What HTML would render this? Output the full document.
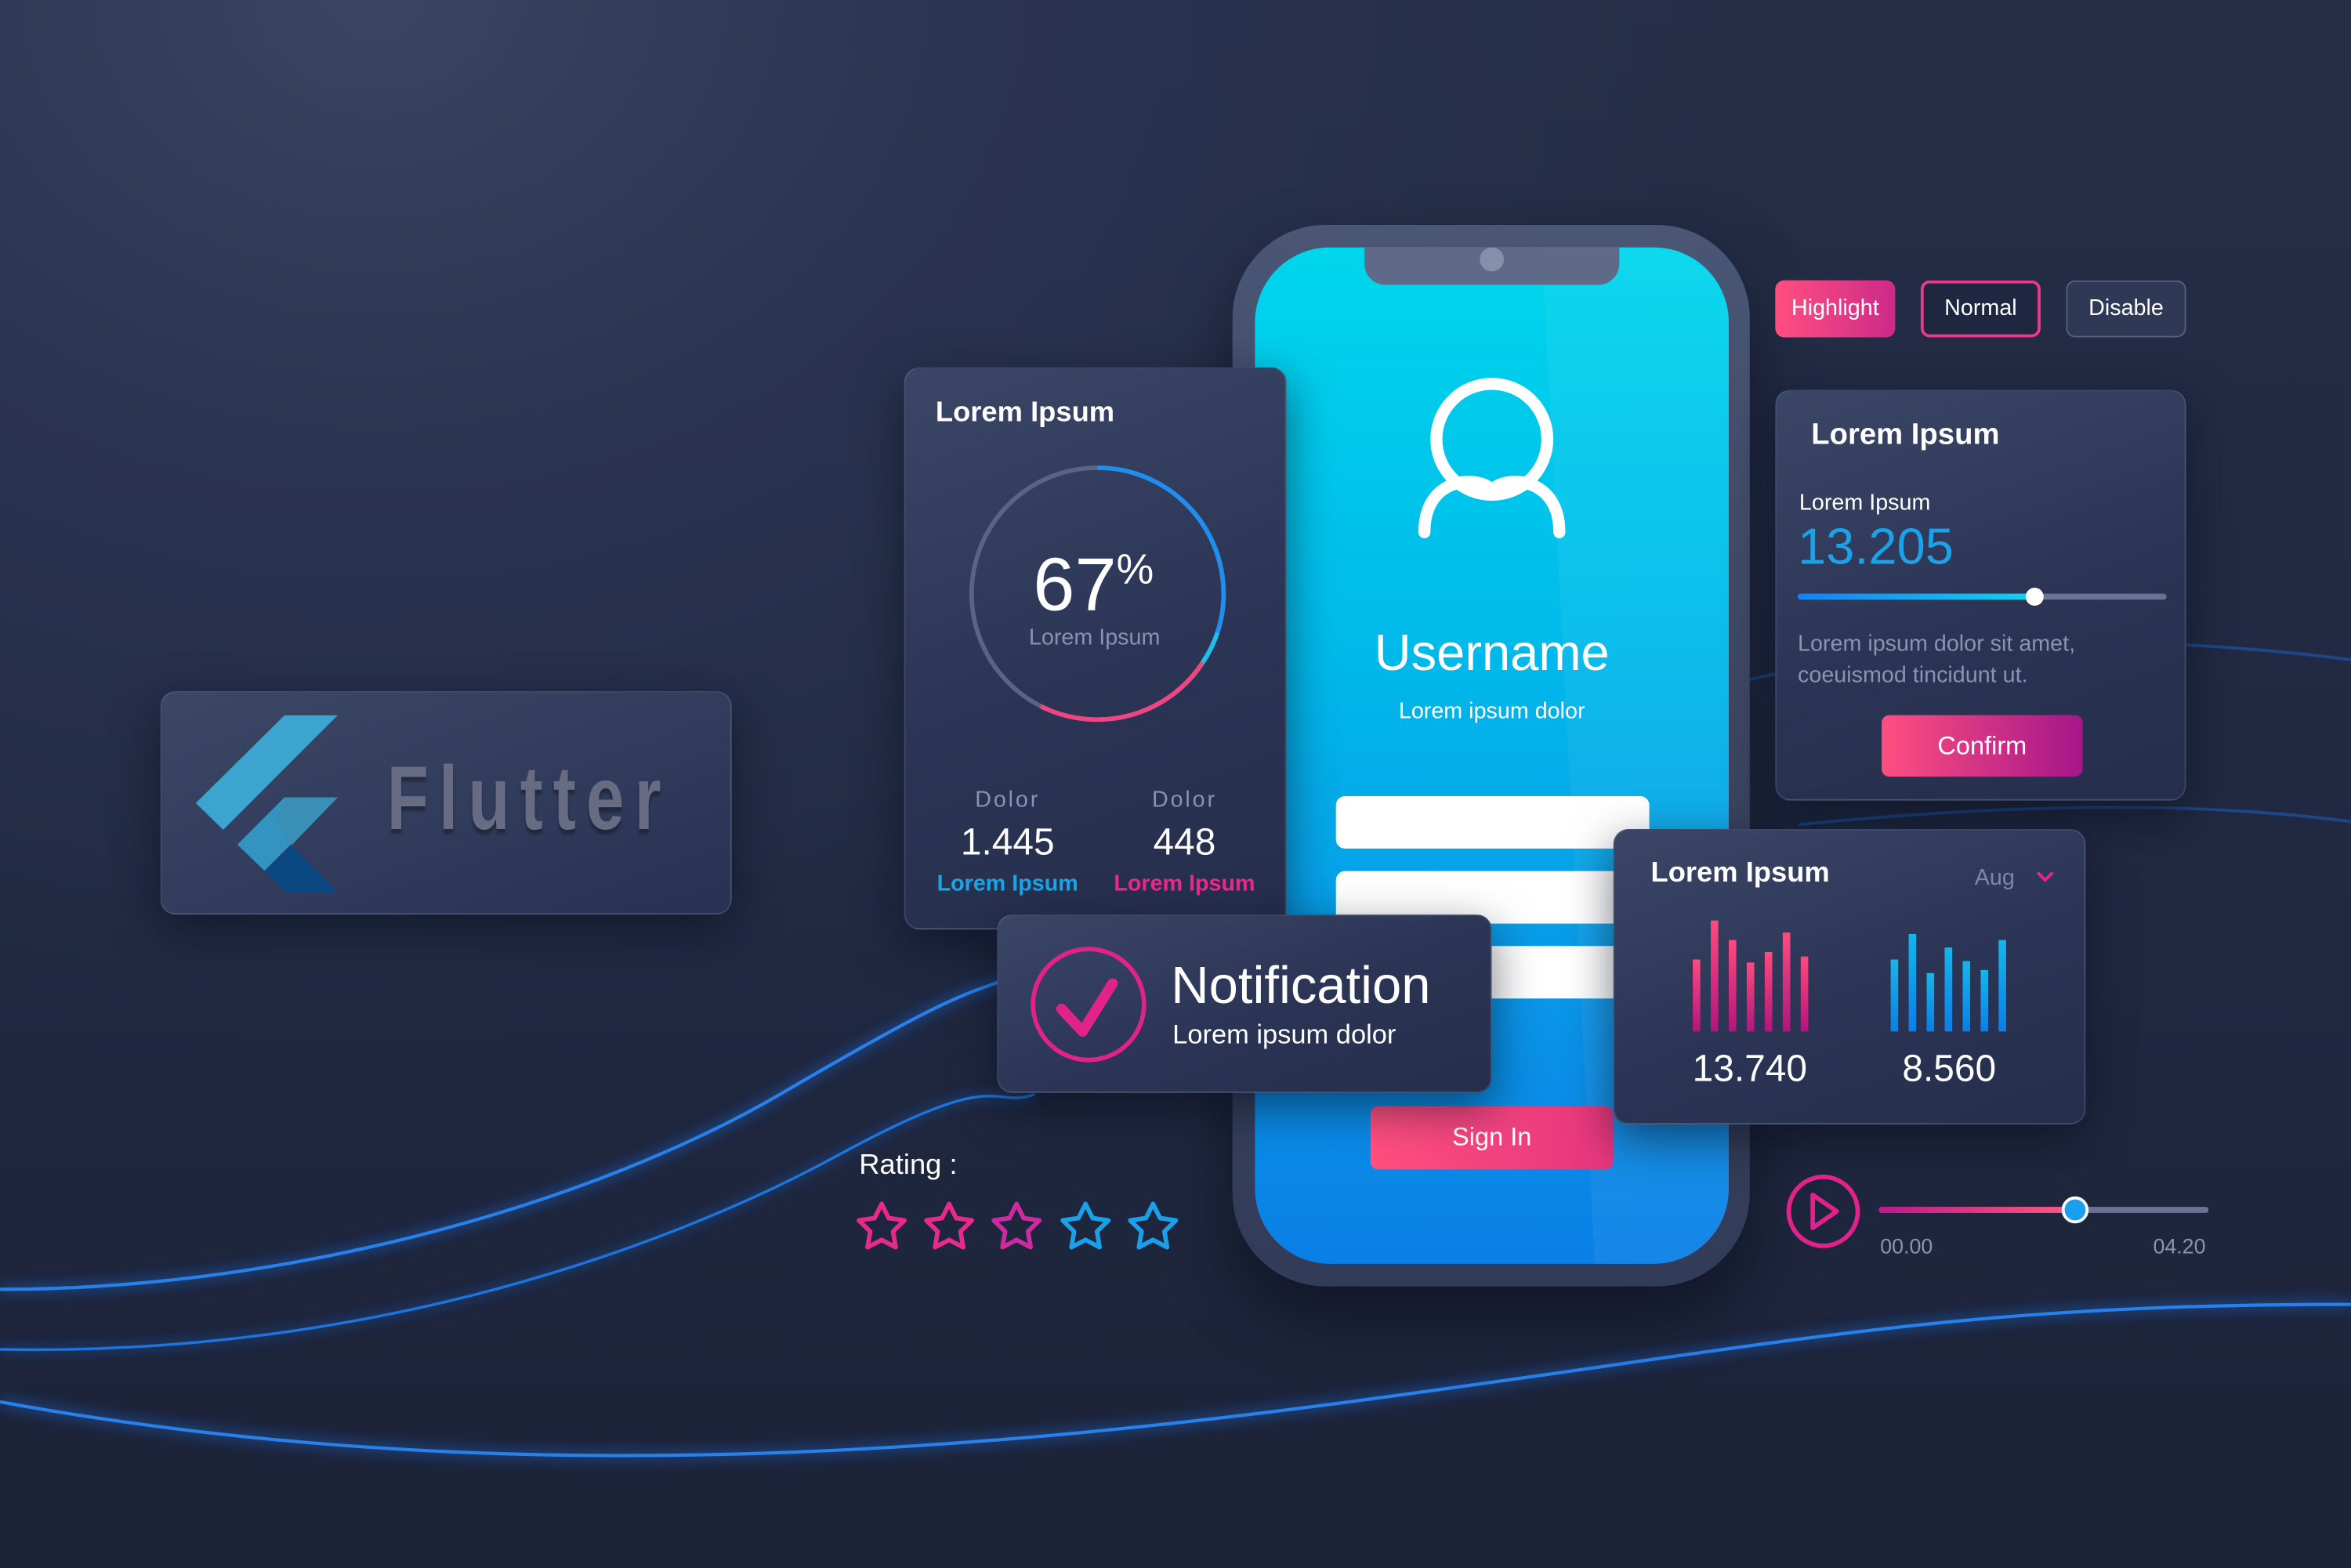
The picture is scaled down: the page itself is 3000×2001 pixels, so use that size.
<!DOCTYPE html>
<html><head><meta charset="utf-8">
<style>
html,body{margin:0;padding:0;width:3000px;height:2000px;overflow:hidden;background:#222a42;}
#w{position:absolute;left:0;top:0;width:1568px;height:1046px;transform:scale(1.913265);transform-origin:0 0;
background:radial-gradient(ellipse 900px 700px at 250px 0px,#3a4562 0%,#2a3350 45%,rgba(34,42,66,0) 100%),linear-gradient(180deg,#252d47 0%,#202841 60%,#1c2338 100%);
font-family:"Liberation Sans","DejaVu Sans",sans-serif;color:#fff;overflow:hidden;}
.a{position:absolute;}
.card{position:absolute;border-radius:10px;background:linear-gradient(160deg,#3b4666 0%,#2b3454 55%,#252e4c 100%);box-shadow:0 10px 30px rgba(8,12,25,.55);border:1px solid rgba(120,135,170,.25);box-sizing:border-box;}
.t{position:absolute;white-space:nowrap;}
</style></head><body><div id="w">
<svg class="a" style="left:0;top:0" width="1568" height="1046">
<defs><filter id="bl" x="-10%" y="-50%" width="120%" height="200%"><feGaussianBlur stdDeviation="4"/></filter></defs>
<g fill="none" stroke="#1a6fe0" opacity=".9">
<path d="M0 860 C200 860 400 800 520 730 S640 665 680 650" stroke-width="8" filter="url(#bl)" opacity=".4"/>
<path d="M0 860 C200 860 400 800 520 730 S640 665 680 650" stroke-width="2.2" stroke="#2a8cff"/>
<path d="M0 900 C250 905 450 830 560 770 S660 740 690 730" stroke-width="6" filter="url(#bl)" opacity=".35"/>
<path d="M0 900 C250 905 450 830 560 770 S660 740 690 730" stroke-width="1.8" stroke="#1f7ef0"/>
<path d="M0 935 C300 990 600 975 900 935 S1300 870 1568 870" stroke-width="8" filter="url(#bl)" opacity=".4"/>
<path d="M0 935 C300 990 600 975 900 935 S1300 870 1568 870" stroke-width="2.2" stroke="#2a8cff"/>
<path d="M1160 455 C1300 420 1450 425 1568 440" stroke-width="2" opacity=".5"/>
<path d="M1200 550 C1350 535 1470 535 1568 548" stroke-width="2" opacity=".5"/>
</g></svg>

<!-- Flutter card -->
<div class="card" style="left:107px;top:461px;width:381px;height:149px;background:linear-gradient(160deg,#3c4766,#283152);">
<svg class="a" style="left:0;top:0" width="381" height="149">
<polygon points="81.7,15.1 117.2,15.1 40.9,91.5 22.6,73.7" fill="#3ba5cf"/>
<polygon points="81.7,69.9 117.2,69.9 68.4,118.8 50.3,101.4" fill="#3394c2"/>
<polygon points="81.7,69.9 117.2,69.9 86.5,101.7 75,86" fill="#3a8fb6"/>
<polygon points="68.4,118.8 86.5,101.7 117.7,133.1 82.6,133.1" fill="#0b4780"/>
</svg>
<div class="t" style="left:150px;top:36px;font-size:60px;font-weight:bold;color:#676c82;letter-spacing:9px;transform:scaleX(.76);transform-origin:0 0;text-shadow:0 3px 2px rgba(0,0,0,.3);font-family:'Liberation Sans Narrow','Liberation Sans',sans-serif;">Flutter</div>
</div>

<!-- Phone -->
<div class="a" style="left:822px;top:150px;width:345px;height:708px;border-radius:62px;background:linear-gradient(180deg,#4a5675,#38425f 60%,#323b57);box-shadow:0 20px 40px rgba(5,10,20,.5);"></div>
<div class="a" style="left:837px;top:165px;width:316px;height:678px;border-radius:50px;overflow:hidden;background:linear-gradient(180deg,#00d6ec 0%,#00b9ea 40%,#0a95e8 75%,#0a7fe6 100%);">
<div class="a" style="left:210px;top:-20px;width:200px;height:760px;background:rgba(255,255,255,.05);transform:skewX(3deg);"></div>
<div class="a" style="left:73px;top:0;width:170px;height:25px;background:#5f6a88;border-radius:0 0 14px 14px;"></div>
<div class="a" style="left:150px;top:0px;width:16px;height:16px;border-radius:50%;background:#8590ac;"></div>
<svg class="a" style="left:100px;top:82px" width="120" height="115"><circle cx="58" cy="46" r="37" fill="none" stroke="#fff" stroke-width="8"/><path d="M13 108 C13 70 50 70 58 80 C66 70 103 70 103 108" fill="none" stroke="#fff" stroke-width="8" stroke-linecap="round"/></svg>
<div class="t" style="left:0;width:316px;text-align:center;top:252px;font-size:34px;">Username</div>
<div class="t" style="left:0;width:316px;text-align:center;top:301px;font-size:15px;">Lorem ipsum dolor</div>
<div class="a" style="left:54px;top:366px;width:209px;height:35px;background:#fff;border-radius:6px;"></div>
<div class="a" style="left:54px;top:416px;width:209px;height:35px;background:#fff;border-radius:6px;"></div>
<div class="a" style="left:54px;top:466px;width:209px;height:35px;background:#fff;border-radius:6px;"></div>
<div class="a" style="left:77px;top:573px;width:162px;height:42px;border-radius:5px;background:linear-gradient(90deg,#ff4f7f,#e6367e);"></div>
<div class="t" style="left:77px;width:162px;text-align:center;top:584px;font-size:17px;">Sign In</div>
</div>

<!-- Card 67% -->
<div class="card" style="left:603px;top:245px;width:255px;height:375px;">
<div class="t" style="left:20px;top:19px;font-size:19px;font-weight:bold;">Lorem Ipsum</div>
<svg class="a" style="left:0;top:0" width="255" height="375">
<circle cx="128" cy="150" r="84" fill="none" stroke="#5b6486" stroke-width="3"/>
<path d="M128 66 A84 84 0 0 1 208 176" fill="none" stroke="#1e8ff0" stroke-width="3"/>
<path d="M208 176 A84 84 0 0 1 198 196" fill="none" stroke="#1cc0e8" stroke-width="3"/>
<path d="M198 196 A84 84 0 0 1 90 225" fill="none" stroke="#f0457f" stroke-width="3"/>
</svg>
<div class="t" style="left:85px;top:115px;font-size:50px;">67<span style="font-size:28px;vertical-align:18px;">%</span></div>
<div class="t" style="left:0;width:252px;text-align:center;top:171px;font-size:15px;color:#8a92b0;">Lorem Ipsum</div>
<div class="t" style="left:8px;width:120px;text-align:center;top:279px;font-size:15px;color:#8a92b0;letter-spacing:1.5px;">Dolor</div>
<div class="t" style="left:126px;width:120px;text-align:center;top:279px;font-size:15px;color:#8a92b0;letter-spacing:1.5px;">Dolor</div>
<div class="t" style="left:8px;width:120px;text-align:center;top:302px;font-size:25px;">1.445</div>
<div class="t" style="left:126px;width:120px;text-align:center;top:302px;font-size:25px;">448</div>
<div class="t" style="left:8px;width:120px;text-align:center;top:335px;font-size:15px;font-weight:bold;color:#18a6ea;">Lorem Ipsum</div>
<div class="t" style="left:126px;width:120px;text-align:center;top:335px;font-size:15px;font-weight:bold;color:#ea2a8c;">Lorem Ipsum</div>
</div>

<!-- Notification -->
<div class="card" style="left:665px;top:610px;width:330px;height:119px;">
<svg class="a" style="left:20px;top:20px" width="80" height="80"><circle cx="40" cy="39" r="37" fill="none" stroke="#e2228b" stroke-width="3"/><path d="M22 42 L36 57 L56 25" fill="none" stroke="#e2228b" stroke-width="7" stroke-linecap="round" stroke-linejoin="round"/></svg>
<div class="t" style="left:115px;top:27px;font-size:35px;">Notification</div>
<div class="t" style="left:116px;top:69px;font-size:18px;">Lorem ipsum dolor</div>
</div>

<!-- Rating -->
<div class="t" style="left:573px;top:767px;font-size:19px;">Rating :</div>
<svg class="a" style="left:565px;top:798px" width="230" height="42">
<defs><path id="st" d="M0,-16 L4.7,-6.5 L15.2,-5 L7.6,2.4 L9.4,12.9 L0,8 L-9.4,12.9 L-7.6,2.4 L-15.2,-5 L-4.7,-6.5 Z" fill="none" stroke-width="3" stroke-linejoin="round"/></defs>
<use href="#st" x="23" y="21" stroke="#e62a8c"/><use href="#st" x="68" y="21" stroke="#e62a8c"/><use href="#st" x="113" y="21" stroke="#cc2aa0"/><use href="#st" x="159" y="21" stroke="#1aa0e8"/><use href="#st" x="204" y="21" stroke="#1aa0e8"/>
</svg>

<!-- Buttons -->
<div class="a" style="left:1184px;top:187px;width:80px;height:38px;border-radius:6px;background:linear-gradient(90deg,#ff4f80,#cc2a8a);"></div>
<div class="t" style="left:1184px;width:80px;text-align:center;top:197px;font-size:15px;">Highlight</div>
<div class="a" style="left:1281px;top:187px;width:80px;height:38px;border-radius:6px;border:2px solid #e83a86;box-sizing:border-box;background:#1f2740;"></div>
<div class="t" style="left:1281px;width:80px;text-align:center;top:197px;font-size:15px;">Normal</div>
<div class="a" style="left:1378px;top:187px;width:80px;height:38px;border-radius:6px;border:1px solid #56607e;box-sizing:border-box;background:#2f3855;"></div>
<div class="t" style="left:1378px;width:80px;text-align:center;top:197px;font-size:15px;">Disable</div>

<!-- Right card -->
<div class="card" style="left:1184px;top:260px;width:274px;height:274px;">
<div class="t" style="left:23px;top:18px;font-size:20px;font-weight:bold;">Lorem Ipsum</div>
<div class="t" style="left:15px;top:66px;font-size:15px;">Lorem Ipsum</div>
<div class="t" style="left:14px;top:85px;font-size:34px;color:#1aa3ea;">13.205</div>
<div class="a" style="left:14px;top:135px;width:246px;height:4px;border-radius:2px;background:#6a7394;"></div>
<div class="a" style="left:14px;top:135px;width:158px;height:4px;border-radius:2px;background:linear-gradient(90deg,#1a7ff0,#19d0ec);"></div>
<div class="a" style="left:166px;top:131px;width:12px;height:12px;border-radius:50%;background:#fff;"></div>
<div class="t" style="left:14px;top:158px;font-size:15px;color:#8a93b0;line-height:21px;">Lorem ipsum dolor sit amet,<br>coeuismod tincidunt ut.</div>
<div class="a" style="left:70px;top:216px;width:134px;height:41px;border-radius:5px;background:linear-gradient(90deg,#ff4f80,#a4168a);"></div>
<div class="t" style="left:70px;width:134px;text-align:center;top:227px;font-size:17px;">Confirm</div>
</div>

<!-- Chart card -->
<div class="card" style="left:1076px;top:553px;width:315px;height:197px;">
<div class="t" style="left:24px;top:18px;font-size:19px;font-weight:bold;">Lorem Ipsum</div>
<div class="t" style="left:240px;top:23px;font-size:15px;color:#7e87a5;">Aug</div>
<svg class="a" style="left:280px;top:26px" width="14" height="10"><path d="M2 2 L7 7 L12 2" fill="none" stroke="#e2288b" stroke-width="2"/></svg>
<svg class="a" style="left:0;top:0" width="315" height="197">
<defs><linearGradient id="pg" x1="0" y1="0" x2="0" y2="1"><stop offset="0" stop-color="#ff4a7e"/><stop offset="1" stop-color="#b0167e"/></linearGradient>
<linearGradient id="bg" x1="0" y1="0" x2="0" y2="1"><stop offset="0" stop-color="#16b5ea"/><stop offset="1" stop-color="#0b7ee6"/></linearGradient></defs>
<g fill="url(#pg)"><rect x="52" y="86" width="5" height="48"/><rect x="64" y="60" width="5" height="74"/><rect x="76" y="73" width="5" height="61"/><rect x="88" y="88" width="5" height="46"/><rect x="100" y="81" width="5" height="53"/><rect x="112" y="68" width="5" height="66"/><rect x="124" y="84" width="5" height="50"/></g>
<g fill="url(#bg)"><rect x="184" y="86" width="5" height="48"/><rect x="196" y="69" width="5" height="65"/><rect x="208" y="95" width="5" height="39"/><rect x="220" y="78" width="5" height="56"/><rect x="232" y="87" width="5" height="47"/><rect x="244" y="93" width="5" height="41"/><rect x="256" y="73" width="5" height="61"/></g>
</svg>
<div class="t" style="left:30px;width:120px;text-align:center;top:145px;font-size:25px;">13.740</div>
<div class="t" style="left:163px;width:120px;text-align:center;top:145px;font-size:25px;">8.560</div>
</div>

<!-- Player -->
<svg class="a" style="left:1190px;top:782px" width="52" height="52"><circle cx="26" cy="26" r="23" fill="none" stroke="#e2228b" stroke-width="3"/><path d="M19 15 L35 26 L19 37 Z" fill="none" stroke="#e2228b" stroke-width="3" stroke-linejoin="round"/></svg>
<div class="a" style="left:1253px;top:805px;width:220px;height:4px;border-radius:2px;background:#6a7394;"></div>
<div class="a" style="left:1253px;top:805px;width:131px;height:4px;border-radius:2px;background:linear-gradient(90deg,#c0188a,#ff5a80);"></div>
<div class="a" style="left:1375px;top:798px;width:14px;height:14px;border-radius:50%;background:#1a9ff0;border:2px solid #fff;"></div>
<div class="t" style="left:1254px;top:823px;font-size:14px;color:#8a93b0;">00.00</div>
<div class="t" style="left:1436px;top:823px;font-size:14px;color:#8a93b0;">04.20</div>
</div></body></html>
